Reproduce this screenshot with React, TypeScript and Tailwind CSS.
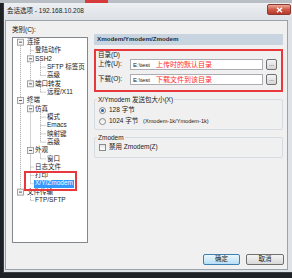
const FONT = '"Liberation Sans", "Noto Sans CJK SC", sans-serif';

type Node = { label: string; level: number; exp?: boolean; sel?: boolean };

const TREE: Node[] = [
  { label: '连接', level: 0, exp: true },
  { label: '登陆动作', level: 1 },
  { label: 'SSH2', level: 1, exp: true },
  { label: 'SFTP 标签页', level: 2 },
  { label: '高级', level: 2 },
  { label: '端口转发', level: 1, exp: true },
  { label: '远程/X11', level: 2 },
  { label: '终端', level: 0, exp: true },
  { label: '仿真', level: 1, exp: true },
  { label: '模式', level: 2 },
  { label: 'Emacs', level: 2 },
  { label: '映射键', level: 2 },
  { label: '高级', level: 2 },
  { label: '外观', level: 1, exp: true },
  { label: '窗口', level: 2 },
  { label: '日志文件', level: 1 },
  { label: '打印', level: 1 },
  { label: 'X/Y/Zmodem', level: 1, sel: true },
  { label: '文件传输', level: 0, exp: true },
  { label: 'FTP/SFTP', level: 1 },
];

const RH = 8.33;
const TEXT_X = [14, 22, 34];
const indent = ['pl-[14px]', 'pl-[22px]', 'pl-[34px]'];

// dotted guide lines + expander boxes
const TreeLines = () => {
  const cy = (i: number) => RH * i + RH / 2;
  const col = (l: number) => 7.5 + 10 * l;
  const vert: [number, number, number][] = [
    [0, cy(0), cy(18)],
    [1, cy(0) + 3, cy(5)],
    [1, cy(7) + 3, cy(17)],
    [1, cy(18) + 3, cy(19)],
    [2, cy(2) + 3, cy(4)],
    [2, cy(5) + 3, cy(6)],
    [2, cy(8) + 3, cy(12)],
    [2, cy(13) + 3, cy(14)],
  ];
  return (
    <svg className="absolute left-0 top-0" width={74} height={RH * 20}>
      {vert.map(([l, a, b], i) => (
        <line key={'v' + i} x1={col(l)} x2={col(l)} y1={a} y2={b} stroke="#a5a5a5" strokeDasharray="1 1" />
      ))}
      {TREE.map((n, i) =>
        n.exp ? null : (
          <line key={'h' + i} x1={col(n.level)} x2={TEXT_X[n.level] - 1} y1={cy(i)} y2={cy(i)} stroke="#a5a5a5" strokeDasharray="1 1" />
        )
      )}
      {TREE.map((n, i) =>
        n.exp ? (
          <g key={'b' + i}>
            <rect x={col(n.level) - 3} y={cy(i) - 3} width={6} height={6} fill="#f4f4f4" stroke="#8f8f8f" strokeWidth={0.8} />
            <line x1={col(n.level) - 1.5} x2={col(n.level) + 1.5} y1={cy(i)} y2={cy(i)} stroke="#333" strokeWidth={0.8} />
          </g>
        ) : null
      )}
    </svg>
  );
};

const PathRow = ({ label, value, note }: { label: string; value: string; note: string }) => (
  <div className="flex items-center h-[11px]">
    <span className="w-[32px] text-[6.5px] leading-none">{label}</span>
    <div className="w-[133px] h-[11px] bg-white border border-[#abadb3] flex items-center pl-[2px]">
      <span className="text-[6px] leading-none">{value}</span>
      <span className="ml-[6px] text-[7px] leading-none text-[#ff2b2b]">{note}</span>
    </div>
    <div className="ml-[3px] w-[11px] h-[11px] border border-[#707070] rounded-[2px] bg-gradient-to-b from-[#f4f4f4] to-[#d6d6d6] flex items-center justify-center text-[6px] leading-none pb-[2px]">...</div>
  </div>
);

const Radio = ({ on, children }: { on?: boolean; children: React.ReactNode }) => (
  <div className="flex items-center h-[8px]">
    <div className="w-[7px] h-[7px] rounded-full border border-[#8a8a8a] bg-gradient-to-b from-[#e6e6e6] to-white flex items-center justify-center">
      {on && <div className="w-[3px] h-[3px] rounded-full bg-[#1b5fa6]" />}
    </div>
    <span className="ml-[3px] text-[6.5px] leading-none whitespace-nowrap">{children}</span>
  </div>
);

export default function App() {
  return (
    <div className="w-[292px] h-[278px] bg-[#1e2226] flex flex-col overflow-hidden text-[#1a1a1a]" style={{ fontFamily: FONT }}>
      <div className="h-[3px] flex bg-[#b9bec4]">
        <div className="ml-[85px] w-[23px] bg-[#d63a3a]" />
      </div>
      <div className="flex">
        <div className="w-[3px]" />
        <div className="w-[289px] h-[270px] bg-[#dfe3e8] border-l border-b border-[#3a3d42] flex flex-col">
          {/* title bar */}
          <div className="h-[17px] flex items-start bg-gradient-to-b from-[#eef0f3] via-[#e4e7eb] to-[#dde1e6]">
            <span className="self-center pl-[3px] text-[6.5px] leading-none text-[#1c1c1c]">会话选项 - 192.168.10.208</span>
            <div className="ml-auto mr-[1px] mt-[1px] w-[24px] h-[11px] rounded-[2px] border border-[#8c3a30] bg-gradient-to-b from-[#e9a99b] via-[#cf5a48] to-[#b8382a] flex items-center justify-center">
              <svg width="7" height="6" viewBox="0 0 7 6">
                <path d="M1 0.8 L6 5.2 M6 0.8 L1 5.2" stroke="#fff" strokeWidth="1.4" />
              </svg>
            </div>
          </div>

          {/* content */}
          <div className="flex-1 ml-[1px] mr-[4px] mb-[2px] border border-[#9aa3ad] bg-[#f0f0f0] flex flex-col">
            <div className="flex">
              <div className="pl-[6px] pt-[5px] flex flex-col">
                <span className="h-[8px] text-[6.5px] leading-[8px]">类别(C):</span>
                <div className="mt-[3px] w-[76px] h-[206px] border border-[#828790] bg-white relative">
                  <TreeLines />
                  <div className="relative flex flex-col">
                    {TREE.map((n, i) => (
                      <div key={i} className={`h-[8.33px] flex items-center ${indent[n.level]}`}>
                        {n.sel ? (
                          <span className="-ml-[1px] px-[1px] h-[8px] flex items-center bg-[#3399ff] text-white text-[6.5px] leading-none">{n.label}</span>
                        ) : (
                          <span className="text-[6.5px] leading-none whitespace-nowrap">{n.label}</span>
                        )}
                      </div>
                    ))}
                  </div>
                  {/* red annotation around 打印 / X/Y/Zmodem */}
                  <div className="absolute left-[11px] top-[133px] w-[53px] h-[20px] border-2 border-[#e8383d]" />
                </div>
              </div>

              <div className="ml-[6px] w-[189px] pt-[13px] flex flex-col">
                <div className="h-[11px] bg-[#c8d4e0] flex items-center pl-[3px] text-[6.2px] font-bold leading-none text-[#1d2a38]">Xmodem/Ymodem/Zmodem</div>

                <div className="mt-[4px] h-[43px] border-2 border-[#e8383d] pl-[2px] flex flex-col">
                  <span className="h-[7px] text-[6.5px] leading-[7px]">目录(D)</span>
                  <div className="mt-[1px]">
                    <PathRow label="上传(U):" value="E:\test" note="上传时的默认目录" />
                  </div>
                  <div className="mt-[4px]">
                    <PathRow label="下载(O):" value="E:\test" note="下载文件到该目录" />
                  </div>
                </div>

                <fieldset className="mt-[4px] border border-[#d5dbe0] rounded-[2px] px-[4px] pb-[4px]">
                  <legend className="ml-[-2px] px-[1px] text-[6.5px] leading-[7px]">X/Ymodem 发送包大小(X)</legend>
                  <div className="mt-[3px]">
                    <Radio on>128 字节</Radio>
                  </div>
                  <div className="mt-[3px]">
                    <Radio>
                      1024 字节 <span className="ml-[3px] text-[5.6px]">(Xmodem-1k/Ymodem-1k)</span>
                    </Radio>
                  </div>
                </fieldset>

                <fieldset className="mt-[4px] border border-[#d5dbe0] rounded-[2px] px-[4px] pb-[6px]">
                  <legend className="ml-[-2px] px-[1px] text-[6.5px] leading-[7px]">Zmodem</legend>
                  <div className="mt-[2px] flex items-center h-[8px]">
                    <div className="w-[7px] h-[7px] border border-[#8a8a8a] bg-gradient-to-b from-[#e4e4e4] to-white" />
                    <span className="ml-[3px] text-[6.5px] leading-none">禁用 Zmodem(Z)</span>
                  </div>
                </fieldset>
              </div>
            </div>

            <div className="mt-[11px] flex justify-end pr-[3px] gap-[6px]">
              <div className="w-[37px] h-[11px] rounded-[2px] border border-[#3c7fb1] bg-gradient-to-b from-[#eaf6fd] to-[#b7dff6] flex items-center justify-center text-[6.5px] leading-none">确定</div>
              <div className="w-[38px] h-[11px] rounded-[2px] border border-[#707070] bg-gradient-to-b from-[#f4f4f4] to-[#d9d9d9] flex items-center justify-center text-[6.5px] leading-none">取消</div>
            </div>
          </div>
        </div>
      </div>
    </div>
  );
}
